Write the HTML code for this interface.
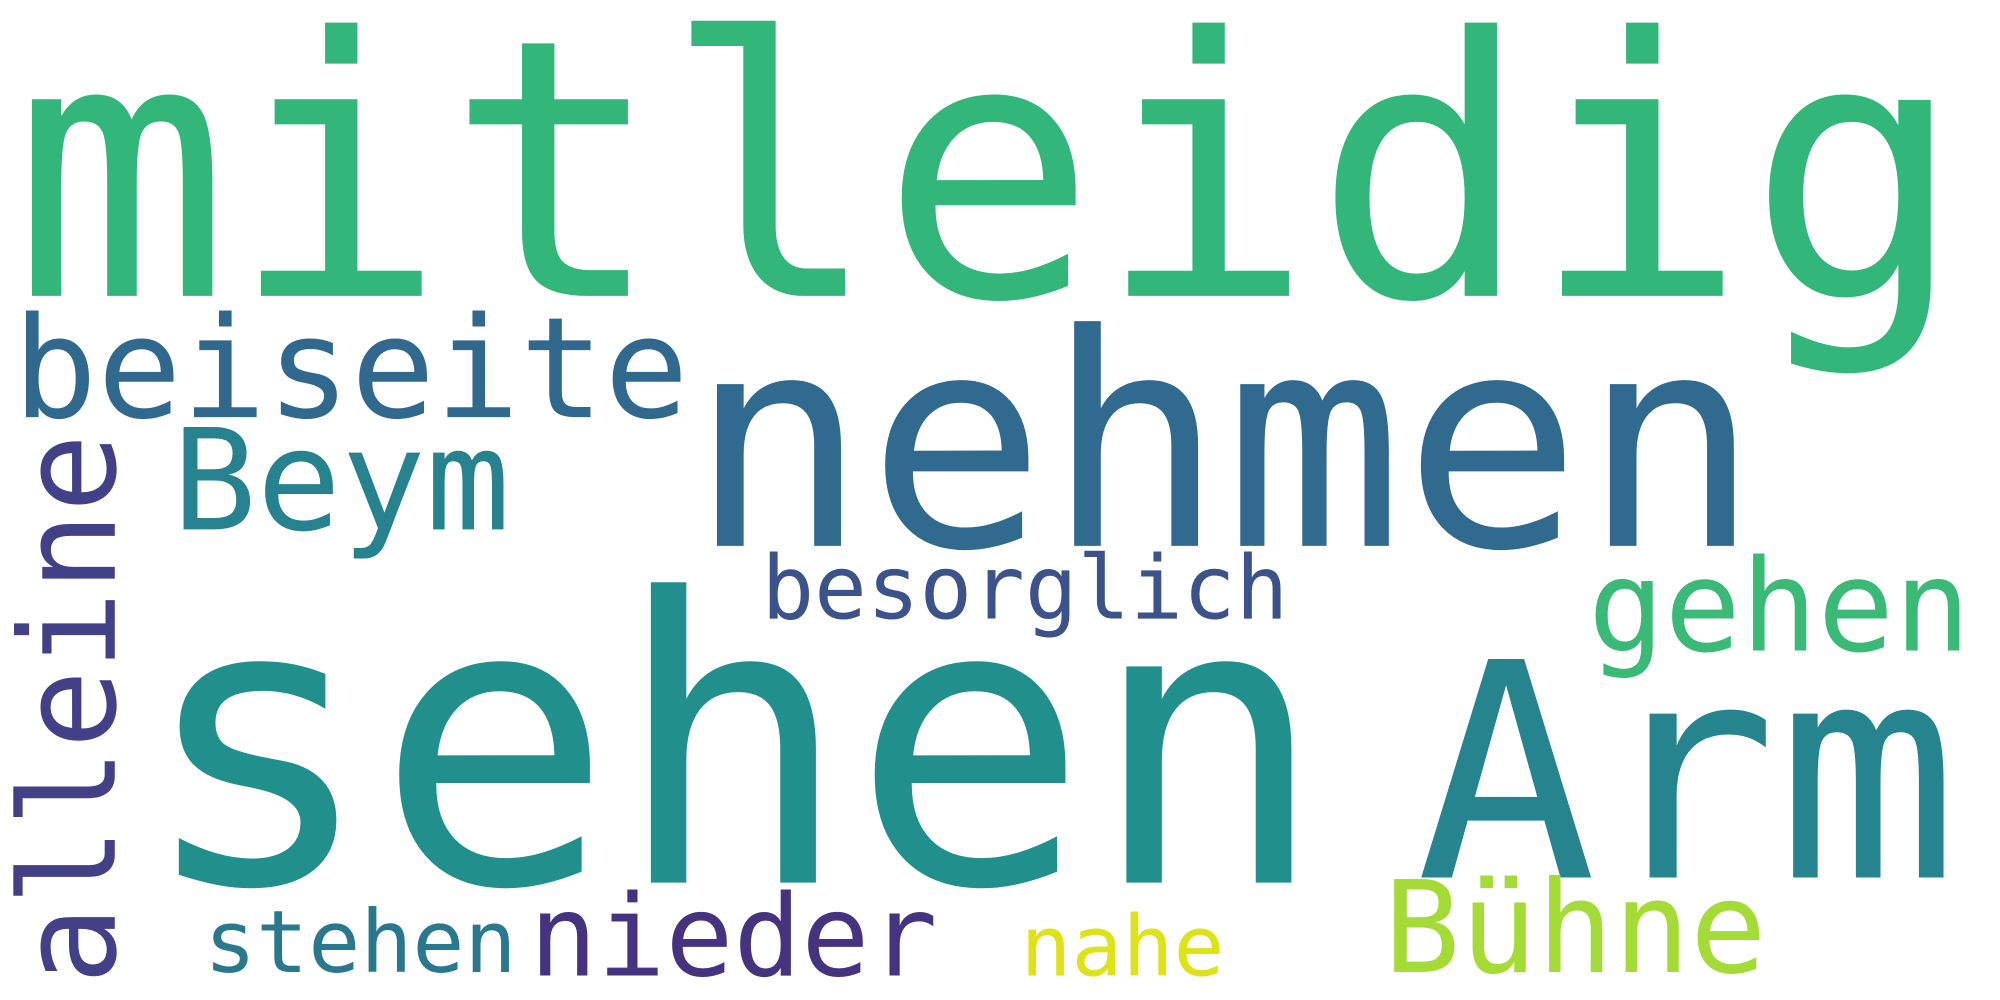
<!DOCTYPE html>
<html><head><meta charset="utf-8"><style>html,body{margin:0;padding:0;background:#fff}svg{display:block}</style></head>
<body>
<svg width="2000" height="1000" viewBox="0 0 1568 784" xmlns="http://www.w3.org/2000/svg" font-family="'DejaVu Sans Mono','Liberation Mono',monospace">
<rect width="1568" height="784" fill="#fff"/>
<text x="10" y="232" font-size="282" fill="#32b67a" textLength="1530" lengthAdjust="spacingAndGlyphs">mitleidig</text>
<text x="540" y="428" font-size="232" fill="#306a8e" textLength="840" lengthAdjust="spacingAndGlyphs">nehmen</text>
<text x="108" y="692" font-size="310" fill="#21908d" textLength="932" lengthAdjust="spacingAndGlyphs">sehen</text>
<text x="1110" y="688" font-size="235" fill="#25848e" textLength="425" lengthAdjust="spacingAndGlyphs">Arm</text>
<text x="1245" y="510" font-size="100" fill="#3aba76" textLength="300" lengthAdjust="spacingAndGlyphs">gehen</text>
<text x="597" y="485" font-size="69" fill="#3b528b" textLength="413" lengthAdjust="spacingAndGlyphs">besorglich</text>
<text x="10" y="327" font-size="110" fill="#31688e" textLength="530" lengthAdjust="spacingAndGlyphs">beiseite</text>
<text x="135" y="415" font-size="110" fill="#26828e" textLength="265" lengthAdjust="spacingAndGlyphs">Beym</text>
<text transform="translate(90,772) rotate(-90)" x="0" y="0" font-size="104" fill="#424086" textLength="432" lengthAdjust="spacingAndGlyphs">alleine</text>
<text x="160" y="762" font-size="68" fill="#2a788e" textLength="245" lengthAdjust="spacingAndGlyphs">stehen</text>
<text x="415" y="765" font-size="89" fill="#46337f" textLength="320" lengthAdjust="spacingAndGlyphs">nieder</text>
<text x="800" y="765" font-size="66" fill="#dde318" textLength="160" lengthAdjust="spacingAndGlyphs">nahe</text>
<text x="1085" y="762" font-size="100" fill="#a5db36" textLength="300" lengthAdjust="spacingAndGlyphs">Bühne</text>
</svg>
</body></html>
